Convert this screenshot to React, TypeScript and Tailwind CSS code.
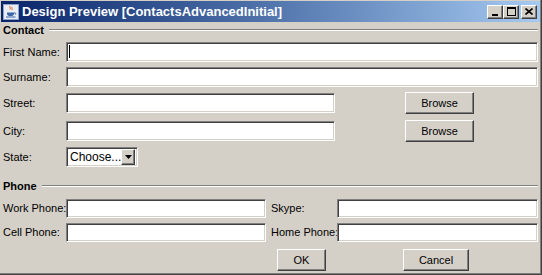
import React from "react";

const sunken =
  "bg-white border border-t-[#808080] border-l-[#808080] border-b-white border-r-white shadow-[inset_1px_1px_0_#404040,inset_-1px_-1px_0_#d4d0c8]";
const raised =
  "bg-[#d4d0c8] border border-t-white border-l-white border-b-[#404040] border-r-[#404040] shadow-[inset_-1px_-1px_0_#808080]";

const Label = ({ text, w = "w-[63px]" }: { text: string; w?: string }) => (
  <div className={`${w} shrink-0 whitespace-nowrap leading-none`}>{text}</div>
);

const Button = ({ text, w }: { text: string; w: string }) => (
  <div className={`${raised} ${w} h-[22px] flex items-center justify-center shrink-0`}>{text}</div>
);

const Heading = ({ text }: { text: string }) => (
  <div className="h-[16px] flex items-center gap-[5px]">
    <span className="font-bold leading-none">{text}</span>
    <div className="flex-1 h-[2px] border-t border-t-[#808080] border-b border-b-white" />
  </div>
);

const JavaIcon = () => (
  <svg width="16" height="16" viewBox="0 0 16 16">
    <rect x="0.5" y="0.5" width="15" height="15" fill="#e9ecf3" stroke="#8ea2c8" />
    <path d="M7 2c-1 1 1 2 0 3.5M9 3c-1 1 1 1.6 0 3" stroke="#e0601a" strokeWidth="1" fill="none" />
    <path d="M4 8.5h7v1.2c0 1.4-1.4 2.3-3.5 2.3S4 11.1 4 9.7z" fill="#3e64a8" />
    <path d="M11 9h1.2c.8 0 .8 1.3-.2 1.5" stroke="#3e64a8" fill="none" />
    <path d="M3 13h9.5" stroke="#3e64a8" />
  </svg>
);

const TitleButton = ({ children, className = "" }: { children: React.ReactNode; className?: string }) => (
  <div className={`${raised} w-[16px] h-[14px] flex items-center justify-center ${className}`}>{children}</div>
);

export default function App() {
  return (
    <div className="w-[542px] h-[275px] bg-[#d4d0c8] text-black text-[11px] font-['Liberation_Sans',Arial,sans-serif] border-r border-b border-r-[#404040] border-b-[#404040] overflow-hidden">
      <div className="h-full border-r border-b border-r-[#808080] border-b-[#808080] pt-[1px] pl-[1px] flex flex-col">
        {/* title bar */}
        <div className="h-[21px] shrink-0 flex items-center bg-gradient-to-r from-[#0a246a] to-[#a6caf0] pl-[2px] pr-[3px]">
          <JavaIcon />
          <span className="ml-[3px] text-white font-bold text-[13px] leading-none whitespace-nowrap">
            Design Preview [ContactsAdvancedInitial]
          </span>
          <div className="ml-auto flex items-center">
            <TitleButton>
              <div className="w-[6px] h-[2px] bg-black mt-[6px]" />
            </TitleButton>
            <TitleButton>
              <div className="w-[9px] h-[9px] border border-black border-t-2" />
            </TitleButton>
            <TitleButton className="ml-[2px]">
              <svg width="8" height="7" viewBox="0 0 8 7">
                <path d="M0.5 0.5l7 6M7.5 0.5l-7 6" stroke="#000" strokeWidth="1.6" />
              </svg>
            </TitleButton>
          </div>
        </div>

        <div className="flex flex-col pl-[2px] pr-[2px]">
          <Heading text="Contact" />

          <div className="flex items-center mt-[4px] h-[20px]">
            <Label text="First Name:" />
            <div className={`${sunken} flex-1 h-[20px] relative`}>
              <div className="absolute left-[2px] top-[2px] w-[1px] h-[13px] bg-black" />
            </div>
          </div>

          <div className="flex items-center mt-[5px] h-[20px]">
            <Label text="Surname:" />
            <div className={`${sunken} flex-1 h-[20px]`} />
          </div>

          <div className="flex items-center mt-[5px] h-[22px]">
            <Label text="Street:" />
            <div className={`${sunken} w-[269px] h-[20px]`} />
            <div className="ml-[70px]">
              <Button text="Browse" w="w-[69px]" />
            </div>
          </div>

          <div className="flex items-center mt-[6px] h-[22px]">
            <Label text="City:" />
            <div className={`${sunken} w-[269px] h-[20px]`} />
            <div className="ml-[70px]">
              <Button text="Browse" w="w-[69px]" />
            </div>
          </div>

          <div className="flex items-center mt-[5px] h-[20px]">
            <Label text="State:" />
            <div className={`${sunken} w-[72px] h-[20px] flex items-center p-[2px]`}>
              <span className="flex-1 pl-[1px] leading-none text-[12px]">Choose...</span>
              <div className={`${raised} w-[16px] h-[16px] flex items-center justify-center`}>
                <svg width="7" height="4" viewBox="0 0 7 4">
                  <path d="M0 0h7L3.5 4z" fill="#000" />
                </svg>
              </div>
            </div>
          </div>

          <div className="mt-[11px]">
            <Heading text="Phone" />
          </div>

          <div className="flex items-center mt-[5px] h-[19px]">
            <Label text="Work Phone:" />
            <div className={`${sunken} w-[200px] h-[19px]`} />
            <div className="ml-[5px]">
              <Label text="Skype:" w="w-[66px]" />
            </div>
            <div className={`${sunken} flex-1 h-[19px]`} />
          </div>

          <div className="flex items-center mt-[5px] h-[19px]">
            <Label text="Cell Phone:" />
            <div className={`${sunken} w-[200px] h-[19px]`} />
            <div className="ml-[5px]">
              <Label text="Home Phone:" w="w-[66px]" />
            </div>
            <div className={`${sunken} flex-1 h-[19px]`} />
          </div>

          <div className="flex items-center mt-[7px]">
            <div className="ml-[274px]">
              <Button text="OK" w="w-[49px]" />
            </div>
            <div className="ml-[77px]">
              <Button text="Cancel" w="w-[66px]" />
            </div>
          </div>
        </div>
      </div>
    </div>
  );
}
